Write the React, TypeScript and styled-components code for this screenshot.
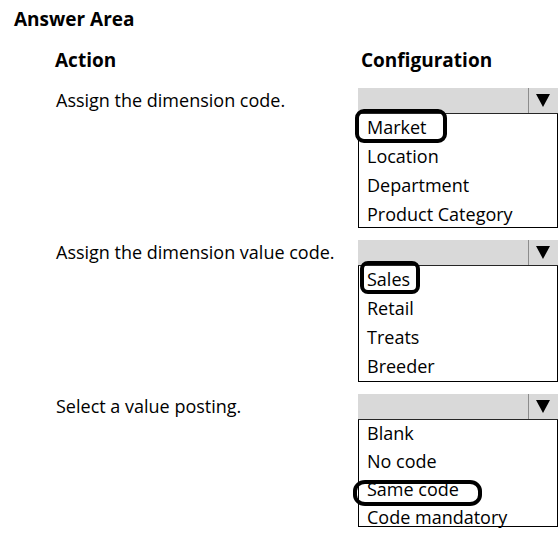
import React from "react";
import styled, { createGlobalStyle } from "styled-components";

const GlobalStyle = createGlobalStyle`
	body {
		margin: 0;
		background: #ffffff;
		font-family: "Open Sans", "Noto Sans", sans-serif;
		color: #000000;
	}
`;

interface Ring {
	top: number;
	right: number;
	bottom: number;
	left: number;
	radius: string;
}

interface Question {
	action: string;
	options: string[];
	marked: number;
	ring: Ring;
	pitch: number;
	listHeight: number;
	gapAfter: number;
}

const questions: Question[] = [
	{
		action: "Assign the dimension code.",
		options: ["Market", "Location", "Department", "Product Category"],
		marked: 0,
		ring: { top: -6, right: -20, bottom: -4, left: -12, radius: "9px" },
		pitch: 28.8,
		listHeight: 114,
		gapAfter: 12,
	},
	{
		action: "Assign the dimension value code.",
		options: ["Sales", "Retail", "Treats", "Breeder"],
		marked: 0,
		ring: { top: -6, right: -10, bottom: -3, left: -7, radius: "8px" },
		pitch: 28.8,
		listHeight: 116,
		gapAfter: 12,
	},
	{
		action: "Select a value posting.",
		options: ["Blank", "No code", "Same code", "Code mandatory"],
		marked: 2,
		ring: { top: 3, right: -23, bottom: -5, left: -14, radius: "12px / 11px" },
		pitch: 28,
		listHeight: 107,
		gapAfter: 0,
	},
];

const App: React.FC = () => {
	return (
		<Page>
			<GlobalStyle />
			<Title>Answer Area</Title>
			<Grid>
				<ColumnHead>Action</ColumnHead>
				<ColumnHead>Configuration</ColumnHead>
				{questions.map((q) => (
					<React.Fragment key={q.action}>
						<ActionText gap={q.gapAfter}>{q.action}</ActionText>
						<Dropdown gap={q.gapAfter}>
							<Select>
								<SelectBody />
								<ArrowBox>
									<Arrow />
								</ArrowBox>
							</Select>
							<Options h={q.listHeight}>
								{q.options.map((o, i) => (
									<Option key={o} pitch={q.pitch}>
										<Label>
											{o}
											{i === q.marked && <Mark ring={q.ring} />}
										</Label>
									</Option>
								))}
							</Options>
						</Dropdown>
					</React.Fragment>
				))}
			</Grid>
		</Page>
	);
};

export default App;

const Page = styled.div`
	width: 558px;
	height: 536px;
	overflow: hidden;
	padding: 7px 0 0 14px;
	box-sizing: border-box;
`;
const Title = styled.div`
	font-size: 19px;
	font-weight: 700;
	line-height: 24px;
`;
const Grid = styled.div`
	display: grid;
	grid-template-columns: 303px 200px;
	margin-left: 41px;
	margin-top: 17px;
`;
const ColumnHead = styled.div`
	font-size: 19px;
	font-weight: 700;
	line-height: 24px;
	height: 40px;
	&:nth-child(2) {
		padding-left: 3px;
	}
`;
const ActionText = styled.div<{ gap: number }>`
	font-size: 18px;
	line-height: 24px;
	padding: 0 0 0 1px;
	margin-bottom: ${(p) => p.gap}px;
`;
const Dropdown = styled.div<{ gap: number }>`
	display: flex;
	flex-direction: column;
	margin-bottom: ${(p) => p.gap}px;
`;
const Select = styled.div`
	display: flex;
	height: 25px;
	background: #d9d9d9;
	border-bottom: 1px solid #262626;
`;
const SelectBody = styled.div`
	flex: 1;
	border-right: 1px solid #8c8c8c;
`;
const ArrowBox = styled.div`
	width: 28px;
	display: flex;
	align-items: center;
	justify-content: center;
	padding-right: 1px;
`;
const Arrow = styled.div`
	width: 0;
	height: 0;
	border-left: 7.5px solid transparent;
	border-right: 7.5px solid transparent;
	border-top: 13px solid #000;
`;
const Options = styled.div<{ h: number }>`
	height: ${(p) => p.h}px;
	border: 1px solid #000;
	border-top: none;
	box-sizing: border-box;
	display: flex;
	flex-direction: column;
	padding: 0 0 0 8px;
`;
const Option = styled.div<{ pitch: number }>`
	height: ${(p) => p.pitch}px;
	box-sizing: border-box;
	padding-bottom: 2px;
	display: flex;
	align-items: center;
	font-size: 18px;
	flex-shrink: 0;
`;
const Label = styled.span`
	position: relative;
	white-space: nowrap;
`;
const Mark = styled.span<{ ring: Ring }>`
	position: absolute;
	top: ${(p) => p.ring.top}px;
	right: ${(p) => p.ring.right}px;
	bottom: ${(p) => p.ring.bottom}px;
	left: ${(p) => p.ring.left}px;
	border: 4px solid #000;
	border-radius: ${(p) => p.ring.radius};
	pointer-events: none;
`;
